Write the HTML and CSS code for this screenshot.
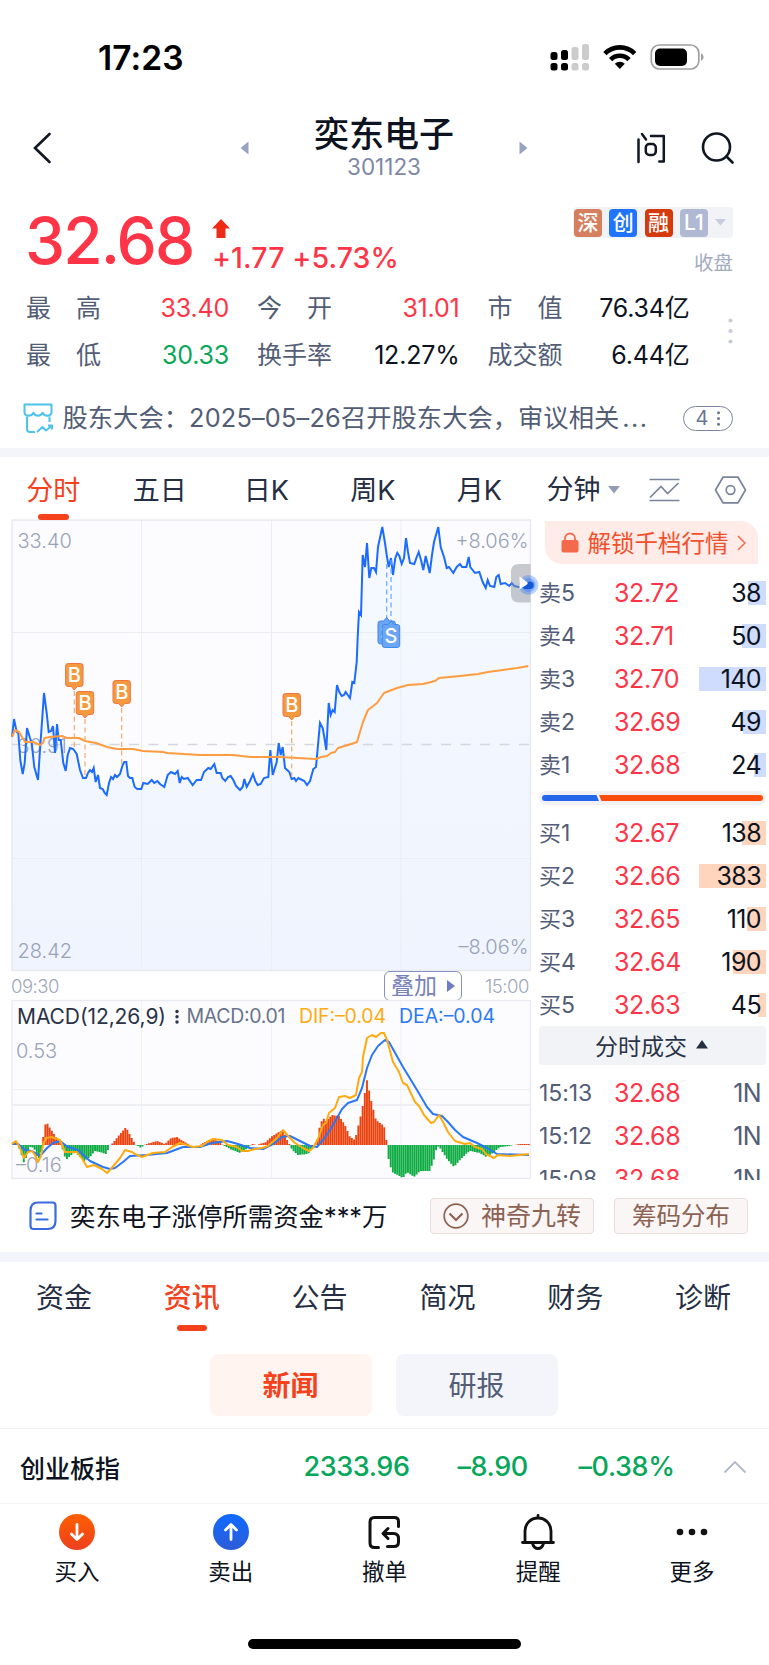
FILE: index.html
```html
<!DOCTYPE html>
<html lang="zh-CN">
<head>
  <meta charset="UTF-8" />
  <meta name="viewport" content="width=device-width, initial-scale=1.0" />
  <title>奕东电子 301123</title>
  <link rel="stylesheet" href="styles.css">
</head>
<body>
  <div class="status">
    <span class="clock">17:23</span>
    <svg class="signals" width="156" height="30" viewBox="549 42 156 30">
      <g fill="#000">
        <rect x="550.5" y="52" width="7" height="8" rx="2.5"/>
        <rect x="561" y="50" width="7" height="10" rx="2.5"/>
        <rect x="550.5" y="63" width="7" height="7.5" rx="2.5"/>
        <rect x="561" y="63" width="7" height="7.5" rx="2.5"/>
      </g>
      <g fill="#ccc">
        <rect x="571.5" y="47" width="7" height="13" rx="2.5"/>
        <rect x="582" y="44" width="7" height="16" rx="2.5"/>
        <rect x="571.5" y="63" width="7" height="7.5" rx="2.5"/>
        <rect x="582" y="63" width="7" height="7.5" rx="2.5"/>
      </g>
      <g fill="none" stroke="#000" stroke-width="4.6">
        <path d="M604.9 53.6a21 21 0 0 1 29.8 0"/>
        <path d="M610.6 59.6a13 13 0 0 1 18.4 0"/>
      </g>
      <path d="M619.8 69l-5-5.2a7.2 7.2 0 0 1 10 0z" fill="#000"/>
      <rect x="651.3" y="45" width="47.5" height="24" rx="8" fill="none" stroke="#a0a0a0" stroke-width="1.7"/>
      <rect x="655" y="48.5" width="32" height="17.5" rx="5" fill="#000"/>
      <path d="M701 53.5c3.4 1 3.4 6.200 0 7.200z" fill="#a0a0a0"/>
    </svg>
  </div>

  <header class="nav">
    <svg class="back" width="20" height="32" viewBox="0 0 20 32"><path d="M17.500 2L3 16l14.500 14" fill="none" stroke="#111722" stroke-width="2.600" stroke-linecap="round"/></svg>
    <div class="stock">
      <svg width="9" height="14" viewBox="0 0 9 14"><path d="M8.500 .5v13L.5 7z" fill="#9aa3bd"/></svg>
      <div class="stock-name">
        <h1>奕东电子</h1>
        <p>301123</p>
      </div>
      <svg width="9" height="14" viewBox="0 0 9 14"><path d="M.5 .5v13L8.500 7z" fill="#9aa3bd"/></svg>
    </div>
    <div class="nav-tools">
      <svg width="30" height="32" viewBox="0 0 30 32" fill="none" stroke="#111722" stroke-width="2.500" stroke-linecap="round" stroke-linejoin="round">
        <path d="M2.500 7.500V30M6 2l4 5.500M15 4h12.800v25.500h-4.500"/>
        <rect x="9.800" y="12" width="10" height="11" rx="3.500"/>
      </svg>
      <svg width="34" height="32" viewBox="0 0 34 32" fill="none" stroke="#111722" stroke-width="2.600" stroke-linecap="round">
        <circle cx="15.500" cy="15" r="13.500"/>
        <path d="M25.500 24.500l6 6"/>
      </svg>
    </div>
  </header>

  <section class="quote">
    <span class="last">32.68</span>
    <div class="change">
      <svg width="18" height="20" viewBox="0 0 18 20"><path d="M9 0l9 9.500h-4.500V19h-9V9.500H0z" fill="#ee2b16"/></svg>
      <p>+1.77 +5.73%</p>
    </div>
    <div class="flags">
      <div class="badges">
        <span class="badge shen">深</span>
        <span class="badge chuang">创</span>
        <span class="badge rong">融</span>
        <span class="badge level">L1</span>
        <svg width="11" height="7" viewBox="0 0 11 7"><path d="M0 0h11L5.500 6.500z" fill="#c6ccdb"/></svg>
      </div>
      <p class="state">收盘</p>
    </div>
  </section>

  <section class="stats">
    <div class="stat-grid">
      <span class="label">最<i></i>高</span><span class="value red">33.40</span>
      <span class="label">今<i></i>开</span><span class="value red">31.01</span>
      <span class="label">市<i></i>值</span><span class="value">76.34亿</span>
      <span class="label">最<i></i>低</span><span class="value green">30.33</span>
      <span class="label">换手率</span><span class="value">12.27%</span>
      <span class="label">成交额</span><span class="value">6.44亿</span>
    </div>
    <svg class="more" width="5" height="26" viewBox="0 0 5 26" fill="#c6cbda"><circle cx="2.500" cy="2.500" r="2.100"/><circle cx="2.500" cy="13" r="2.100"/><circle cx="2.500" cy="23.500" r="2.100"/></svg>
  </section>

  <section class="notice">
    <svg width="31" height="31" viewBox="0 0 31 31" fill="none" stroke="#4cc3ea" stroke-width="2" stroke-linejoin="round">
      <path d="M1.500 1.500h27v8.200c-1 4-7.400 4-9 0-1.400 4-7.600 4-9 0-1.600 4-8 4-9 0z"/>
      <path d="M4 13.500v12.500q0 3 3 3h5M26.500 13.500V19"/>
      <path d="M14 29l5.500-5 3.500 3.500 5.500-4.500M25 22.500h4v4"/>
    </svg>
    <p>股东大会：<b>2025–05–26</b>召开股东大会，审议相关<i>...</i></p>
    <span class="count">4 <svg width="3" height="15" viewBox="0 0 3 15" fill="#6b7691"><circle cx="1.500" cy="1.800" r="1.500"/><circle cx="1.500" cy="7.500" r="1.500"/><circle cx="1.500" cy="13.200" r="1.500"/></svg></span>
  </section>

  <div class="band"></div>

  <nav class="periods">
    <a class="active">分时</a>
    <a>五日</a>
    <a>日K</a>
    <a>周K</a>
    <a>月K</a>
    <div class="period-tools">
      <span>分钟</span>
      <svg class="caret" width="12" height="8" viewBox="0 0 12 8"><path d="M0 0h12L6 7.500z" fill="#949db5"/></svg>
      <svg class="trend" width="31" height="25" viewBox="0 0 31 25" fill="none" stroke="#7a849e" stroke-width="1.700"><path d="M.5 1.500h30M.5 22.500h30M1 19.500l11-11 6.500 7L29.500 5"/></svg>
      <svg width="33" height="28" viewBox="0 0 33 28" fill="none" stroke="#7a849e" stroke-width="1.700"><path d="M9 1.200h15L31.500 14 24 26.800H9L1.500 14z"/><circle cx="16.500" cy="14" r="4.300"/></svg>
    </div>
  </nav>

  <main class="market">
    <div class="charts">
      <svg class="chart" width="520" height="452" viewBox="11 519 520 452">
        <defs>
          <linearGradient id="fade" x1="0" y1="0" x2="0" y2="1">
            <stop offset="0" stop-color="#f5f9ff"/>
            <stop offset="1" stop-color="#eff4fe"/>
          </linearGradient>
        </defs>
        <rect x="12" y="520" width="518.500" height="450.500" fill="#fcfcff"/>
        <path id="area" fill="url(#fade)"/>
        <g stroke="#ebedf2" fill="none">
          <path d="M141.500 520v450M271.500 520v450M401 520v450M12 632.500h518M12 858.500h518"/>
          <rect x="12" y="520" width="518.500" height="450.500" stroke="#e6e9ee" stroke-width="1.400"/>
        </g>
        <path d="M12 744.500h518" stroke="#d4d6e0" stroke-width="1.400" stroke-dasharray="10 9.500"/>
        <g class="axis-text">
          <text x="17.500" y="547.500">33.40</text>
          <text x="17.500" y="752.500">30.91</text>
          <text x="17.500" y="958">28.42</text>
          <text x="528.500" y="547.500" text-anchor="end">+8.06%</text>
          <text x="528.500" y="953.500" text-anchor="end">–8.06%</text>
        </g>
        <polyline id="price" class="line-price" points="12,737 14,719 16.7,732 18.3,733 20.3,760 22.7,774 24.7,763 27,728 30,738 31.7,743 34.3,767 38,780 40,750 44,693 46.7,713 48.7,732 51,731 53,726 55,753 57,724 58.7,740 60.7,740 63.3,763 65.7,771 67.7,755 70,748 73.3,749 76.7,754 80,770 83,778 86,778 88,773 90,770 92,772 93.7,768 95.7,782 98,775 100,788 102.7,789 104.7,793 106.7,795 109,783 111,777 113,779 115,775 117,777 120,774 122.7,765 124.3,762 126.3,762 128,776 130,778 132.3,778 134.7,787 137.3,789 141.3,789 143.3,783 147.7,784 151.7,780 154.3,783 157.3,781 160,784 164.3,787 167.7,775 171,772 175,774 177.7,771 179.7,783 181.7,777 184,779 187.7,778 192.7,785 196.7,780 201,780 204,772 208.3,768 210.7,769 214.3,764 216.7,773 220.7,773 222.3,778 225.3,781 228,777 230.7,776 233.3,780 236,786 240,790 242.7,787 244.3,779 246.7,787 250,781 253,774 255.3,781 257.7,785 260.7,784 264,778 268.3,777 270.3,750 272.7,775 276.7,762 278.7,743 280.7,755 282.7,747 285,768 289.3,772 291.7,779 294.3,778 296,781 298.3,778 304.3,781 307,785 310,781 313.3,769 316,767 320,723 322.7,728 324.3,737 326.3,750 328.7,703 330.7,715 332.7,710 334.7,712 337,685 339.3,692 341.7,696 344,695 345.7,692 347.7,695 350,698 352.3,682 354.3,683 356.7,662 357.7,637 359,612 361,615 362.7,555 365,567 367,543 369.3,578 371.3,568 374,568 376,572 378,547 382.3,527 385,543 386.7,555 388.7,567 391,558 393,575 395.3,558 397.3,553 399.3,556 401.7,564 404,558 406,538 408,552 410,563 414.3,564 416.7,557 418.7,552 421,560 423.3,570 425.7,556 429.7,573 432,555 434,542 438.3,527 440.7,547 444.3,558 446.7,568 449,567 453.3,573 456.7,567 460,564 462,567 466.3,567 468.7,557 470.3,567 475,573 479.3,572 482.7,582 485.7,588 487.7,580 490,586 494.3,587 496.3,577 498.7,575 500.7,584 505,583 509.3,586 511.7,583 514.3,586 518.3,587 523.3,587 528.3,586"/>
        <polyline class="line-avg" points="12,737 15,730 19,732 25,742 33,742 40,745 43,743 44.5,738 50,737 62,736 67,738 79,738 85,741 96,743 107,747 117,749 133,749 143,751 163,752 167,753 200,755 233,755 250,757 280,757 297,758 316,759 321,757 327,756 331,753 335,752 338,748 348,745 357,742 359,735 363,722 368,710 377,703 384,693 397,688 408,685 423,684 435,681 439,678 460,676 478,674 488,672 517,668 523,667 528.3,666"/>
        <g class="mark buy">
          <path class="stem" d="M74.300 691v58M85 719v58M121.700 708v57M291.700 721v58"/>
          <g transform="translate(74.300 690)"><path d="M0 0l-3-3.500h-3.200q-2.500 0-2.500-2.500v-18q0-2.500 2.500-2.500H6.200q2.500 0 2.500 2.500v18q0 2.500-2.500 2.500H3z"/><text y="-8">B</text></g>
          <g transform="translate(85 718)"><path d="M0 0l-3-3.500h-3.200q-2.500 0-2.500-2.500v-18q0-2.500 2.500-2.500H6.200q2.500 0 2.500 2.500v18q0 2.500-2.500 2.500H3z"/><text y="-8">B</text></g>
          <g transform="translate(121.700 707)"><path d="M0 0l-3-3.500h-3.200q-2.500 0-2.500-2.500v-18q0-2.500 2.500-2.500H6.200q2.500 0 2.500 2.500v18q0 2.500-2.500 2.500H3z"/><text y="-8">B</text></g>
          <g transform="translate(291.700 720)"><path d="M0 0l-3-3.500h-3.200q-2.500 0-2.500-2.500v-18q0-2.500 2.500-2.500H6.200q2.500 0 2.500 2.500v18q0 2.500-2.500 2.500H3z"/><text y="-8">B</text></g>
        </g>
        <g class="mark sell">
          <path class="stem" d="M386.700 564v54M391 560v62"/>
          <g transform="translate(386.700 617.500)"><path d="M0 0l3 3.500H6.200q2.500 0 2.500 2.500v18q0 2.500-2.500 2.500H-6.200q-2.500 0-2.500-2.500V6q0-2.500 2.500-2.500H-3z"/><text y="22">S</text></g>
          <g transform="translate(391 621)"><path d="M0 0l3 3.500H6.200q2.500 0 2.500 2.500v18q0 2.500-2.500 2.500H-6.200q-2.500 0-2.500-2.500V6q0-2.500 2.500-2.500H-3z"/><text y="22">S</text></g>
        </g>
        <path d="M530.500 564H519q-8 0-8 8v22.500q0 8 8 8h11.500z" fill="#8f939b" fill-opacity=".48"/>
        <circle cx="528.500" cy="585" r="10" fill="#1f6bff" fill-opacity=".3"/>
        <circle cx="528.500" cy="585" r="7" fill="#1f6bff" fill-opacity=".35"/>
        <path d="M522 586.500q6-5 8-5a3.500 3.500 0 0 1 0 7.500h-6z" fill="#1358d8"/>
        <path d="M519.500 576.500l7.500 5.500q1.500 1 0 2.500l-7.500 5z" fill="#fff"/>
      </svg>

      <div class="axis">
        <span>09:30</span>
        <button class="overlay-btn">叠加 <svg width="8" height="12" viewBox="0 0 8 12"><path d="M0 0l8 6-8 6z" fill="#6b7cc0"/></svg></button>
        <span>15:00</span>
      </div>

      <svg class="chart" width="520" height="179" viewBox="11 1000 520 179">
        <rect x="12" y="1000.500" width="518.500" height="178" fill="#fcfcff" stroke="#e9ebf1" stroke-width="1.300"/>
        <g stroke="#eff1f5" fill="none">
          <path d="M141.500 1001v177M271.500 1001v177M401 1001v177M12 1089.500h518"/>
          <path d="M12 1105h518" stroke="#e9ebef" stroke-width="1.600"/>
        </g>
        <path id="bars-up" fill="#ea430f"/>
        <path id="bars-down" fill="#0eac43"/>
        <text class="macd-name" x="17" y="1023.500" textLength="149">MACD(12,26,9)</text>
        <g fill="#2a3347"><circle cx="177" cy="1011.500" r="1.700"/><circle cx="177" cy="1016.800" r="1.700"/><circle cx="177" cy="1022" r="1.700"/></g>
        <text class="macd-text" x="186.500" y="1023" textLength="99" fill="#68728a">MACD:0.01</text>
        <text class="macd-text" x="299" y="1023" textLength="87" fill="#ffab10">DIF:–0.04</text>
        <text class="macd-text" x="399" y="1023" textLength="96" fill="#2b79f7">DEA:–0.04</text>
        <g class="axis-text">
          <text x="16" y="1058">0.53</text>
          <text x="16" y="1171.500">–0.16</text>
        </g>
        <polyline class="line-dea" points="13,1144 18,1144 25,1150 32,1151 40,1156 47,1148 53,1143 60,1141 68,1147 78,1150 90,1161 103,1167 110,1169 115,1168 123,1162 130,1156 147,1155 167,1153 183,1147 200,1147 212,1143 227,1141 238,1144 250,1148 263,1149 273,1144 282,1137 290,1136 298,1140 310,1146 317,1147 323,1140 330,1130 337,1118 342,1109 348,1103 357,1100 362,1088 367,1068 372,1055 378,1046 385,1040 389,1042 403,1067 417,1090 427,1107 433,1114 442,1116 448,1122 455,1130 463,1137 477,1143 487,1148 497,1154 529,1155"/>
        <polyline class="line-dif" points="12,1144 16,1141 20,1148 24,1158 28,1152 32,1151 35,1155 38,1162 41,1156 43,1145 46,1138 52,1137 54,1138 60,1140 65,1152 73,1152 77,1152 83,1160 87,1167 94,1165 102,1169 107,1173 110,1170 115,1164 120,1158 125,1150 132,1152 135,1154 142,1157 153,1153 165,1152 172,1147 180,1143 193,1147 202,1146 207,1142 213,1139 222,1140 228,1145 237,1147 242,1151 248,1151 255,1149 262,1148 268,1146 277,1138 283,1130 289,1137 295,1143 303,1148 309,1151 313,1148 318,1139 323,1125 326,1123 329,1113 335,1108 339,1097 345,1096 350,1098 356,1095 359,1078 362,1072 363,1057 367,1038 372,1035 376,1037 381,1033 384,1033 387,1040 393,1062 399,1072 403,1083 407,1085 415,1102 419,1106 424,1115 431,1123 434,1122 439,1115 443,1122 448,1132 455,1141 465,1144 470,1143 475,1147 482,1149 486,1154 494,1158 498,1155 510,1156 529,1154"/>
      </svg>
    </div>

    <aside class="depth">
      <a class="unlock">
        <svg width="18" height="21" viewBox="0 0 18 21"><rect x=".5" y="8" width="17" height="12.500" rx="2" fill="#f4694b"/><path d="M4 9V6.500a5 5 0 0 1 10 0V9" fill="none" stroke="#f4694b" stroke-width="1.800"/></svg>
        <span>解锁千档行情</span>
        <svg width="9" height="16" viewBox="0 0 9 16"><path d="M1 1l7 7-7 7" fill="none" stroke="#f4694b" stroke-width="1.500"/></svg>
      </a>
      <ul class="book sell-side">
        <li><span>卖<em>5</em></span><b>32.72</b><i style="--w:18px">38</i></li>
        <li><span>卖<em>4</em></span><b>32.71</b><i style="--w:24px">50</i></li>
        <li><span>卖<em>3</em></span><b>32.70</b><i style="--w:67px">140</i></li>
        <li><span>卖<em>2</em></span><b>32.69</b><i style="--w:23px">49</i></li>
        <li><span>卖<em>1</em></span><b>32.68</b><i style="--w:12px">24</i></li>
      </ul>
      <div class="ratio">
        <svg width="221" height="6" viewBox="0 0 221 6">
          <path d="M3 0h51.500l2.500 6H3a3 3 0 0 1 0-6z" fill="#2366ea"/>
          <path d="M57 0h161a3 3 0 0 1 0 6H59.500z" fill="#fa4d0c"/>
        </svg>
      </div>
      <ul class="book buy-side">
        <li><span>买<em>1</em></span><b>32.67</b><i style="--w:24px">138</i></li>
        <li><span>买<em>2</em></span><b>32.66</b><i style="--w:67px">383</i></li>
        <li><span>买<em>3</em></span><b>32.65</b><i style="--w:19px">110</i></li>
        <li><span>买<em>4</em></span><b>32.64</b><i style="--w:33px">190</i></li>
        <li><span>买<em>5</em></span><b>32.63</b><i style="--w:8px">45</i></li>
      </ul>
      <div class="deals-head">分时成交 <svg width="12" height="9" viewBox="0 0 12 9"><path d="M6 0l6 8.500H0z" fill="#262f42"/></svg></div>
      <ul class="book deals">
        <li><span>15:13</span><b>32.68</b><i>1N</i></li>
        <li><span>15:12</span><b>32.68</b><i>1N</i></li>
        <li><span>15:08</span><b>32.68</b><i>1N</i></li>
      </ul>
    </aside>
  </main>

  <section class="hint">
    <svg width="28" height="30" viewBox="0 0 28 30" fill="none" stroke="#3a6be0" stroke-width="2.200" stroke-linecap="round">
      <path d="M9 1.500h14.500q3 0 3 3V20q0 8-8 8H4.500q-3 0-3-3V9.500q0-8 7.500-8z"/><path d="M7.500 12.500h5M7.500 18.500h11"/>
    </svg>
    <p>奕东电子涨停所需资金***万</p>
    <button class="tool nine">
      <svg width="26" height="26" viewBox="0 0 26 26" fill="none" stroke="#8c6253" stroke-width="1.700"><circle cx="13" cy="13" r="11.800"/><path d="M6.500 10.500l6.500 6.500 6.500-6.500" stroke-width="2.200"/></svg>
      神奇九转
    </button>
    <button class="tool chips">筹码分布</button>
  </section>

  <div class="band wide"></div>

  <nav class="info-tabs">
    <a>资金</a>
    <a class="active">资讯</a>
    <a>公告</a>
    <a>简况</a>
    <a>财务</a>
    <a>诊断</a>
  </nav>
  <div class="pills">
    <a class="active">新闻</a>
    <a>研报</a>
  </div>

  <section class="index">
    <span class="index-name">创业板指</span>
    <span>2333.96</span>
    <span>–8.90</span>
    <span>–0.38%</span>
    <svg width="24" height="14" viewBox="0 0 24 14"><path d="M1.500 12.500L12 2l10.500 10.500" fill="none" stroke="#b3b9cc" stroke-width="1.800"/></svg>
  </section>

  <footer class="tabbar">
    <a>
      <svg width="36" height="36" viewBox="0 0 36 36"><defs><linearGradient id="buy" x1="0" y1="0" x2="0" y2="1"><stop offset="0" stop-color="#ff5f00"/><stop offset="1" stop-color="#ed3f1e"/></linearGradient></defs><circle cx="18" cy="18" r="18" fill="url(#buy)"/><path d="M18 10.500V25M12.500 20l5.500 5.500 5.500-5.500" fill="none" stroke="#fff" stroke-width="2.800" stroke-linecap="round" stroke-linejoin="round"/></svg>
      买入
    </a>
    <a>
      <svg width="36" height="36" viewBox="0 0 36 36"><defs><linearGradient id="sell" x1="0" y1="0" x2="0" y2="1"><stop offset="0" stop-color="#0f6aff"/><stop offset="1" stop-color="#2d5cd8"/></linearGradient></defs><circle cx="18" cy="18" r="18" fill="url(#sell)"/><path d="M18 25.500V11M12.500 16l5.500-5.500 5.500 5.500" fill="none" stroke="#fff" stroke-width="2.800" stroke-linecap="round" stroke-linejoin="round"/></svg>
      卖出
    </a>
    <a>
      <svg width="36" height="36" viewBox="0 0 36 36" fill="none" stroke="#111" stroke-width="3" stroke-linecap="round" stroke-linejoin="round"><path d="M32.500 12.500V7.500q0-4-4-4h-20q-4.500 0-4.500 4.500v21q0 4.500 4.500 4.500h4"/><path d="M22 14.500l-5 5 5 5M17.500 19.500h10q5 0 5 5v3.500q0 4.500-4.500 4.500h-6.500"/></svg>
      撤单
    </a>
    <a>
      <svg width="36" height="36" viewBox="0 0 36 36" fill="none" stroke="#111" stroke-width="2.800" stroke-linecap="round"><path d="M2.500 28.500h31M5 28V17a13 13 0 0 1 26 0v11M18 1.500v2M12.500 29.500q1.500 5 5.500 5t5.500-5"/></svg>
      提醒
    </a>
    <a>
      <svg width="36" height="36" viewBox="0 0 36 36" fill="#111"><circle cx="6" cy="18" r="3.300"/><circle cx="18" cy="18" r="3.300"/><circle cx="30" cy="18" r="3.300"/></svg>
      更多
    </a>
    <div class="home-bar"></div>
  </footer>

  <script>
    // Close the price line down to the bottom of the chart to fill the area
    const price = document.getElementById('price').getAttribute('points');
    document.getElementById('area').setAttribute('d', `M12 970 L${price} L530 586 L530 970 Z`);

    // MACD histogram: x position and bar height, up is positive
    const macd = [
      [12,2],[16,4],[20,-5],[24,-18],[28,-8],[30,-2],[34,-3],[38,-15],[41,-8],[42,1],[46,24],[50,17],[54,11],[58,5],[61,2],
      [63,-6],[66,-15],[69,-12],[75,-7],[80,-12],[84,-16],[90,-12],[95,-6],[100,-7],[106,-9],[109,-3],[110,0],[112,1],
      [116,6],[120,11],[126,18],[130,10],[134,3],[135,0],[138,-1],[141,-3],[144,0],[150,2],[157,4],[165,1],[171,7],[177,8],
      [183,4],[190,0],[200,0],[205,3],[212,6],[218,4],[223,0],[230,-4],[240,-8],[248,-3],[252,1],[257,0],[266,3],[271,8],
      [277,12],[283,15],[288,3],[290,0],[292,-5],[298,-10],[308,-9],[314,0],[317,4],[320,20],[323,27],[326,24],[332,30],
      [339,29],[345,20],[350,8],[355,5],[358,18],[362,35],[367,65],[371,45],[376,25],[384,19],[386,8],[387,0],[388,-12],
      [392,-27],[403,-33],[407,-27],[414,-32],[420,-26],[430,-26],[434,-14],[437,-1],[440,-3],[447,-14],[454,-22],
      [460,-15],[466,-9],[470,-6],[480,-8],[486,-12],[493,-8],[500,-2],[510,-1],[514,0],[520,1],[529,1]
    ];
    const zero = 1145;
    const step = 518 / 240;
    let up = '', down = '', k = 0;
    for (let x = 13; x < 529; x += step) {
      while (k < macd.length - 2 && macd[k + 1][0] < x) k++;
      const [x0, v0] = macd[k];
      const [x1, v1] = macd[k + 1];
      const v = v0 + (v1 - v0) * (x - x0) / (x1 - x0);
      const bar = `M${(x - 0.95).toFixed(2)} ${zero}v${(-v).toFixed(1)}h1.9v${v.toFixed(1)}z`;
      if (v > 0) up += bar;
      else down += bar;
    }
    document.getElementById('bars-up').setAttribute('d', up);
    document.getElementById('bars-down').setAttribute('d', down);
  </script>
</body>
</html>
```
FILE: styles.css
```css
* {
  box-sizing: border-box;
}
body {
  margin: 0;
  width: 769px;
  height: 1665px;
  overflow: hidden;
  background-color: #fff;
  color: #0d1321;
  font-family: Inter, "Noto Sans CJK SC", sans-serif;
}
h1, p, ul {
  margin: 0;
  padding: 0;
  font-weight: 400;
}
svg {
  display: block;
  flex: none;
}
b, i, em {
  font-weight: 400;
  font-style: normal;
}
button {
  font-family: inherit;
  padding: 0;
}
.red { color: #ff3547; }
.green { color: #07a65a; }

/* Status bar */
.status {
  height: 108px;
  padding: 42px 64px 0 98px;
  display: flex;
  justify-content: space-between;
}
.clock {
  font-size: 33.500px;
  font-weight: 600;
  line-height: 32px;
  letter-spacing: 0.1px;
  color: #000;
}

/* Header */
.nav {
  height: 80px;
  padding: 0 34px 0 32px;
  display: flex;
  align-items: center;
  justify-content: space-between;
}
.back {
  margin-right: 76px;
}
.stock {
  display: flex;
  align-items: center;
  justify-content: space-between;
  width: 289px;
  margin-left: 4px;
}
.stock-name {
  margin-top: -5px;
  text-align: center;
}
.stock-name h1 {
  font-size: 35px;
  font-weight: 500;
  line-height: 42px;
}
.stock-name p {
  font-size: 22.500px;
  line-height: 24px;
  color: #7e88a5;
}
.nav-tools {
  display: flex;
  gap: 35px;
}

/* Last price */
.quote {
  height: 96px;
  padding: 19px 36px 0 25px;
  display: flex;
}
.last {
  width: 187px;
  font-size: 64px;
  font-weight: 500;
  line-height: 68px;
  letter-spacing: -1.9px;
  color: #ff3547;
}
.change {
  padding-top: 12px;
  font-size: 28.500px;
  font-weight: 500;
  line-height: 37px;
  color: #ff3547;
}
.change p {
  font-weight: 500;
  letter-spacing: 0.1px;
}
.flags {
  margin-left: auto;
}
.badges {
  display: flex;
  align-items: center;
  gap: 7.300px;
  width: 160px;
  height: 31px;
  padding-left: 1px;
  border-radius: 4px;
  background-color: #f2f3f6;
}
.badge {
  width: 28px;
  height: 28px;
  border-radius: 4px;
  color: #fff;
  font-size: 21px;
  font-weight: 500;
  line-height: 27px;
  text-align: center;
}
.shen { background-color: #d57f5e; }
.chuang { background-color: #2073ff; }
.rong { background-color: #d43a0c; }
.level { background-color: #afb9d3; }
.state {
  margin-top: 11px;
  font-size: 19.500px;
  line-height: 28px;
  text-align: right;
  color: #a3abc1;
}

/* Day figures */
.stats {
  height: 94px;
  padding: 0 36px 0 26px;
  display: flex;
  align-items: center;
  justify-content: space-between;
}
.stat-grid {
  display: grid;
  grid-template-columns: 75px 156px 75px 155.500px 75px 155px;
  grid-template-rows: 47px 47px;
  font-size: 25px;
  line-height: 48px;
}
.stat-grid .label {
  display: flex;
  justify-content: space-between;
  color: #535d76;
}
.stat-grid .value {
  padding-right: 28px;
  text-align: right;
  letter-spacing: -0.2px;
  white-space: nowrap;
}

/* Company notice */
.notice {
  height: 60px;
  margin-top: 10px;
  padding: 0 36px 0 23px;
  display: flex;
  align-items: center;
}
.notice p {
  margin-left: 8.500px;
  font-size: 25.300px;
  line-height: 36px;
  white-space: nowrap;
  color: #535d76;
}
.notice p b {
  letter-spacing: 0.2px;
}
.notice p i {
  margin-left: 3px;
  letter-spacing: 1.500px;
}
.count {
  display: flex;
  align-items: center;
  justify-content: center;
  gap: 9px;
  width: 50px;
  height: 25px;
  margin-left: auto;
  border: 1.5px solid #7a849e;
  border-radius: 13px;
  font-size: 20px;
  color: #6b7691;
}

.band {
  height: 9px;
  background-color: #f4f5fa;
}
.band.wide {
  height: 10px;
}

/* Chart period tabs */
.periods {
  height: 62px;
  display: flex;
  font-size: 27px;
  line-height: 68px;
  color: #252e42;
}
.periods a {
  position: relative;
  width: 106.500px;
  text-align: center;
}
.periods .active {
  color: #f5411c;
}
.periods .active::after {
  content: "";
  position: absolute;
  left: 38px;
  top: 57px;
  width: 31px;
  height: 6px;
  border-radius: 3px;
  background-color: #f5411c;
}
.periods .period-tools {
  display: flex;
  align-items: center;
  height: 66px;
  margin-left: 14px;
}
.periods .caret {
  margin: 0 29px 0 7px;
}
.periods .trend {
  margin-right: 34px;
}

/* Chart and order book */
.market {
  display: flex;
  height: 661px;
  padding-left: 11px;
  overflow: hidden;
}
.charts {
  width: 520px;
}
.chart {
  overflow: visible;
}
.axis-text {
  font-size: 20px;
  font-weight: 300;
  fill: #9aa2b8;
}
.line-price, .line-avg, .line-dea, .line-dif {
  fill: none;
  stroke-width: 2px;
  stroke-linejoin: round;
}
.line-price { stroke: #1c6bff; stroke-linejoin: miter; }
.line-avg { stroke: #ff9c40; }
.line-dea { stroke: #2b78f6; }
.line-dif { stroke: #ffab10; }
.mark text {
  font-size: 20px;
  font-weight: 500;
  text-anchor: middle;
  fill: #fff;
}
.mark .stem {
  fill: none;
  stroke-width: 1.2px;
  stroke-dasharray: 5 3.5;
}
.buy path { fill: #f39a41; stroke: #f27342; }
.buy .stem { stroke: #f3a866; }
.sell path { fill: #6aa6f3; stroke: #4387ea; }
.sell .stem { stroke: #6aa6f3; }
.axis {
  display: flex;
  align-items: center;
  height: 29px;
  font-size: 18.500px;
  font-weight: 300;
  letter-spacing: -0.5px;
  color: #9fa7bb;
}
.overlay-btn {
  display: flex;
  align-items: center;
  justify-content: center;
  gap: 10px;
  width: 78px;
  height: 30px;
  margin: 0 23px 0 auto;
  border: 1.5px solid #8590c4;
  border-radius: 6px;
  background-color: #fff;
  font-size: 23px;
  line-height: 26px;
  color: #7682b8;
}
.axis span:last-child {
  width: 46px;
}
.macd-name {
  font-size: 21px;
  fill: #2a3347;
}
.macd-text {
  font-size: 19.500px;
}

/* Order book */
.depth {
  width: 238px;
  padding: 2px 3px 0 8px;
}
.unlock {
  display: flex;
  align-items: center;
  gap: 8.500px;
  width: 213px;
  height: 43px;
  margin-left: 6px;
  padding-left: 16px;
  border-radius: 0 17px 0 17px;
  background-color: #ffebe7;
  font-size: 23.500px;
  color: #f2502c;
}
.unlock span {
  margin-top: -2px;
}
.book {
  list-style: none;
}
.book li {
  display: flex;
  height: 43px;
  line-height: 44px;
  font-size: 25px;
}
.book span {
  width: 75px;
  font-size: 22px;
  color: #535d76;
}
.book em {
  font-size: 23px;
}
.book b {
  letter-spacing: -0.4px;
  color: #ff3547;
}
.book i {
  align-self: center;
  width: 67px;
  height: 24px;
  margin-left: auto;
  padding-right: 5px;
  background: linear-gradient(#cfdcfd, #cfdcfd) right / var(--w, 0) 100% no-repeat;
  line-height: 25px;
  letter-spacing: -0.6px;
  text-align: right;
}
.sell-side {
  margin-top: 7px;
}
.buy-side {
  margin-top: 6px;
}
.buy-side i {
  background-image: linear-gradient(#ffd5bd, #ffd5bd);
}
.ratio {
  display: flex;
  align-items: center;
  height: 14px;
  margin-top: 5px;
  padding-left: 3px;
  border-radius: 7px;
  background-color: #f1f1f4;
}
.deals-head {
  display: flex;
  align-items: center;
  justify-content: center;
  gap: 9px;
  height: 39px;
  padding: 0 2px 2px 0;
  border-radius: 4px;
  background-color: #f2f3f7;
  font-size: 23px;
  color: #2a3347;
}
.deals {
  margin-top: 6px;
}
.deals span {
  letter-spacing: -0.1px;
  font-size: 23px;
}
.deals i {
  background: none;
  line-height: 24px;
  color: #535d76;
}

/* Hint line under the chart */
.hint {
  display: flex;
  align-items: center;
  height: 72px;
  padding: 0 21px 0 29px;
}
.hint p {
  margin: -2px auto 0 13px;
  font-size: 25.400px;
  white-space: nowrap;
}
.tool {
  display: flex;
  align-items: center;
  justify-content: center;
  gap: 12px;
  height: 36px;
  border: 1px solid #e9dfdd;
  border-radius: 4px;
  background-color: #faf6f6;
  font-size: 25px;
  line-height: 34px;
  color: #8c6253;
}
.nine {
  width: 164px;
  margin-right: 20px;
}
.chips {
  width: 134px;
  font-size: 24.500px;
}

/* Info tabs */
.info-tabs {
  display: flex;
  height: 72px;
  padding-right: 2px;
  font-size: 28px;
  line-height: 72px;
  color: #252e42;
}
.info-tabs a {
  position: relative;
  flex: 1;
  text-align: center;
}
.info-tabs .active {
  color: #f5411c;
  font-weight: 500;
}
.info-tabs .active::after {
  content: "";
  position: absolute;
  left: 49px;
  top: 63px;
  width: 30px;
  height: 6px;
  border-radius: 3px;
  background-color: #f5411c;
}
.pills {
  display: flex;
  justify-content: center;
  gap: 24px;
  padding: 20px 2px 12px 0;
}
.pills a {
  width: 162px;
  height: 62px;
  border-radius: 8px;
  background-color: #f4f5fa;
  font-size: 28px;
  line-height: 64px;
  text-align: center;
  color: #535d76;
}
.pills .active {
  background-color: #fff4f0;
  font-weight: 700;
  color: #f5411c;
}

/* Index ticker */
.index {
  display: grid;
  grid-template-columns: 283.500px 154px 121px 144px 24px;
  align-items: center;
  height: 75px;
  padding: 1px 0 0 20px;
  border-top: 1px solid #eff0f2;
  font-size: 27px;
  font-weight: 500;
  letter-spacing: -0.4px;
  color: #07a65a;
}
.index .index-name {
  font-size: 25px;
  letter-spacing: 0;
  color: #0d1321;
}

/* Bottom bar */
.tabbar {
  display: grid;
  grid-template-columns: repeat(5, 1fr);
  align-content: start;
  height: 162px;
  padding-top: 10px;
  border-top: 1px solid #f3f4f6;
}
.tabbar a {
  display: flex;
  flex-direction: column;
  align-items: center;
  gap: 5px;
  height: 125px;
  font-size: 22.500px;
  line-height: 34px;
}
.home-bar {
  grid-column: 1 / -1;
  justify-self: center;
  width: 273px;
  height: 10px;
  border-radius: 5px;
  background-color: #000;
}
```
